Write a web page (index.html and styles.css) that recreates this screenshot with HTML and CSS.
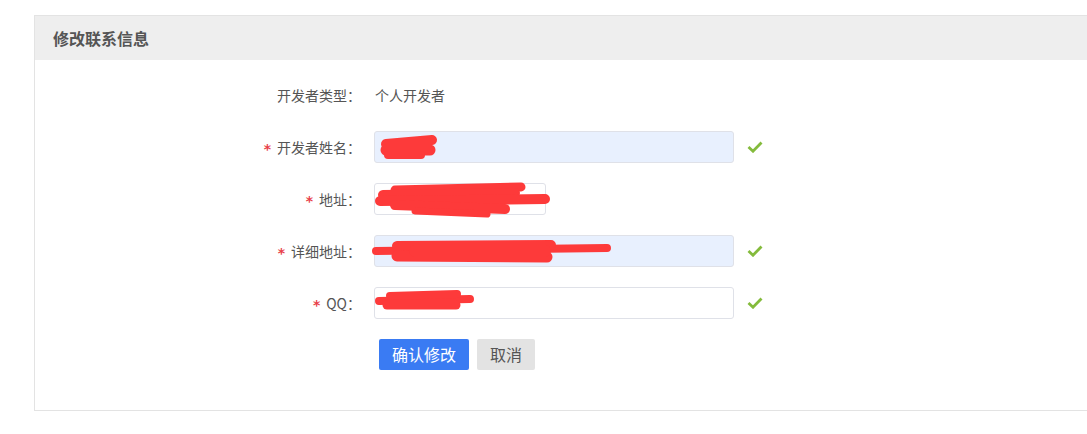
FILE: index.html
```html
<!DOCTYPE html>
<html lang="zh-CN">
<head>
<meta charset="utf-8">
<title>修改联系信息</title>
<link rel="stylesheet" href="styles.css">
</head>
<body>
<div class="panel">
  <div class="panel-head">修改联系信息</div>
  <div class="panel-body">
    <div class="form">
      <div class="label">开发者类型：</div>
      <div class="value">个人开发者</div>
      <div></div>

      <div class="label"><span class="star">*</span>开发者姓名：</div>
      <div class="field autofill">
        <svg class="scribble" width="80" height="32" viewBox="0 0 80 32"><g stroke="#fd3a3a" stroke-linecap="round" fill="none"><path d="M11 12 L57 8" stroke-width="10"/><path d="M11 18 L55 18" stroke-width="11"/><path d="M13 23 L46 23" stroke-width="8"/></g></svg>
      </div>
      <div class="check"><svg width="16" height="12" viewBox="0 0 16 12"><path d="M1.5 6 L6 10.2 L14.5 1.5" stroke="#84bb3c" stroke-width="2.8" fill="none"/></svg></div>

      <div class="label"><span class="star">*</span>地址：</div>
      <div class="field short">
        <svg class="scribble" width="180" height="40" viewBox="0 0 180 40"><g stroke="#fd3a3a" stroke-linecap="round" fill="none"><path d="M20 6 L146 3" stroke-width="9"/><path d="M8 11 L140 9" stroke-width="10"/><path d="M5 17 L170 15" stroke-width="10"/><path d="M20 21 L130 25" stroke-width="10"/><path d="M40 27 L112 30" stroke-width="7"/></g></svg>
      </div>
      <div></div>

      <div class="label"><span class="star">*</span>详细地址：</div>
      <div class="field autofill">
        <svg class="scribble" width="240" height="32" viewBox="0 0 240 32"><g stroke="#fd3a3a" stroke-linecap="round" fill="none"><path d="M1 15 L232 12" stroke-width="8"/><path d="M22 10 L176 9" stroke-width="10"/><path d="M22 20 L172 21" stroke-width="11"/><path d="M40 15 L170 15" stroke-width="12"/></g></svg>
      </div>
      <div class="check"><svg width="16" height="12" viewBox="0 0 16 12"><path d="M1.5 6 L6 10.2 L14.5 1.5" stroke="#84bb3c" stroke-width="2.8" fill="none"/></svg></div>

      <div class="label"><span class="star">*</span>QQ：</div>
      <div class="field">
        <svg class="scribble" width="100" height="32" viewBox="0 0 100 32"><g stroke="#fd3a3a" stroke-linecap="round" fill="none"><path d="M4 13 L95 11" stroke-width="8"/><path d="M15 8 L82 6" stroke-width="8"/><path d="M12 17 L81 17" stroke-width="9"/></g></svg>
      </div>
      <div class="check"><svg width="16" height="12" viewBox="0 0 16 12"><path d="M1.5 6 L6 10.2 L14.5 1.5" stroke="#84bb3c" stroke-width="2.8" fill="none"/></svg></div>

      <div></div>
      <div class="actions">
        <button class="btn btn-primary">确认修改</button>
        <button class="btn btn-default">取消</button>
      </div>
      <div></div>
    </div>
  </div>
</div>
</body>
</html>
```
FILE: styles.css
```css
html, body {
  margin: 0;
  padding: 0;
  background: #fff;
  overflow: hidden;
}
body {
  font-family: "Noto Sans CJK SC", "Liberation Sans", sans-serif;
  font-size: 14px;
  color: #555;
  padding-top: 15px;
}
.panel {
  margin-left: 34px;
  width: 1060px;
  border: 1px solid #e3e3e3;
  box-sizing: border-box;
  height: 396px;
}
.panel-head {
  height: 44px;
  background: #eeeeee;
  padding-left: 18px;
  display: flex;
  align-items: center;
  font-size: 16px;
  font-weight: bold;
  color: #555;
}
.panel-body {
  padding-top: 19px;
}
.form {
  display: grid;
  grid-template-columns: 326px 360px 20px;
  grid-auto-rows: 32px;
  column-gap: 13px;
  row-gap: 20px;
  align-items: center;
}
.label {
  text-align: right;
  color: #555;
  white-space: nowrap;
  line-height: 32px;
}
.star {
  color: #e8414a;
  margin-right: 6px;
  font-family: "DejaVu Sans", sans-serif;
  font-size: 14px;
  font-weight: bold;
  position: relative;
  top: 1px;
}
.value {
  padding-left: 1px;
  color: #555;
}
.field {
  position: relative;
  height: 32px;
  box-sizing: border-box;
  border: 1px solid #dfe1e8;
  border-radius: 3px;
  background: #fff;
}
.field.autofill {
  background: #e8f0fe;
}
.field.short {
  width: 172px;
}
.scribble {
  position: absolute;
  left: 0;
  top: 0;
  overflow: visible;
}
.check {
  display: flex;
  align-items: center;
}
.check svg {
  display: block;
}
.actions {
  display: flex;
  gap: 8px;
  padding-left: 5px;
  height: 31px;
  align-self: start;
}
.btn {
  border: none;
  border-radius: 2px;
  height: 31px;
  padding: 0 13px;
  font-family: "Noto Sans CJK SC", sans-serif;
  font-size: 16px;
  line-height: 31px;
  cursor: pointer;
}
.btn-primary {
  background: #3a7bf3;
  color: #fff;
}
.btn-default {
  background: #e3e3e3;
  color: #555;
}
```
